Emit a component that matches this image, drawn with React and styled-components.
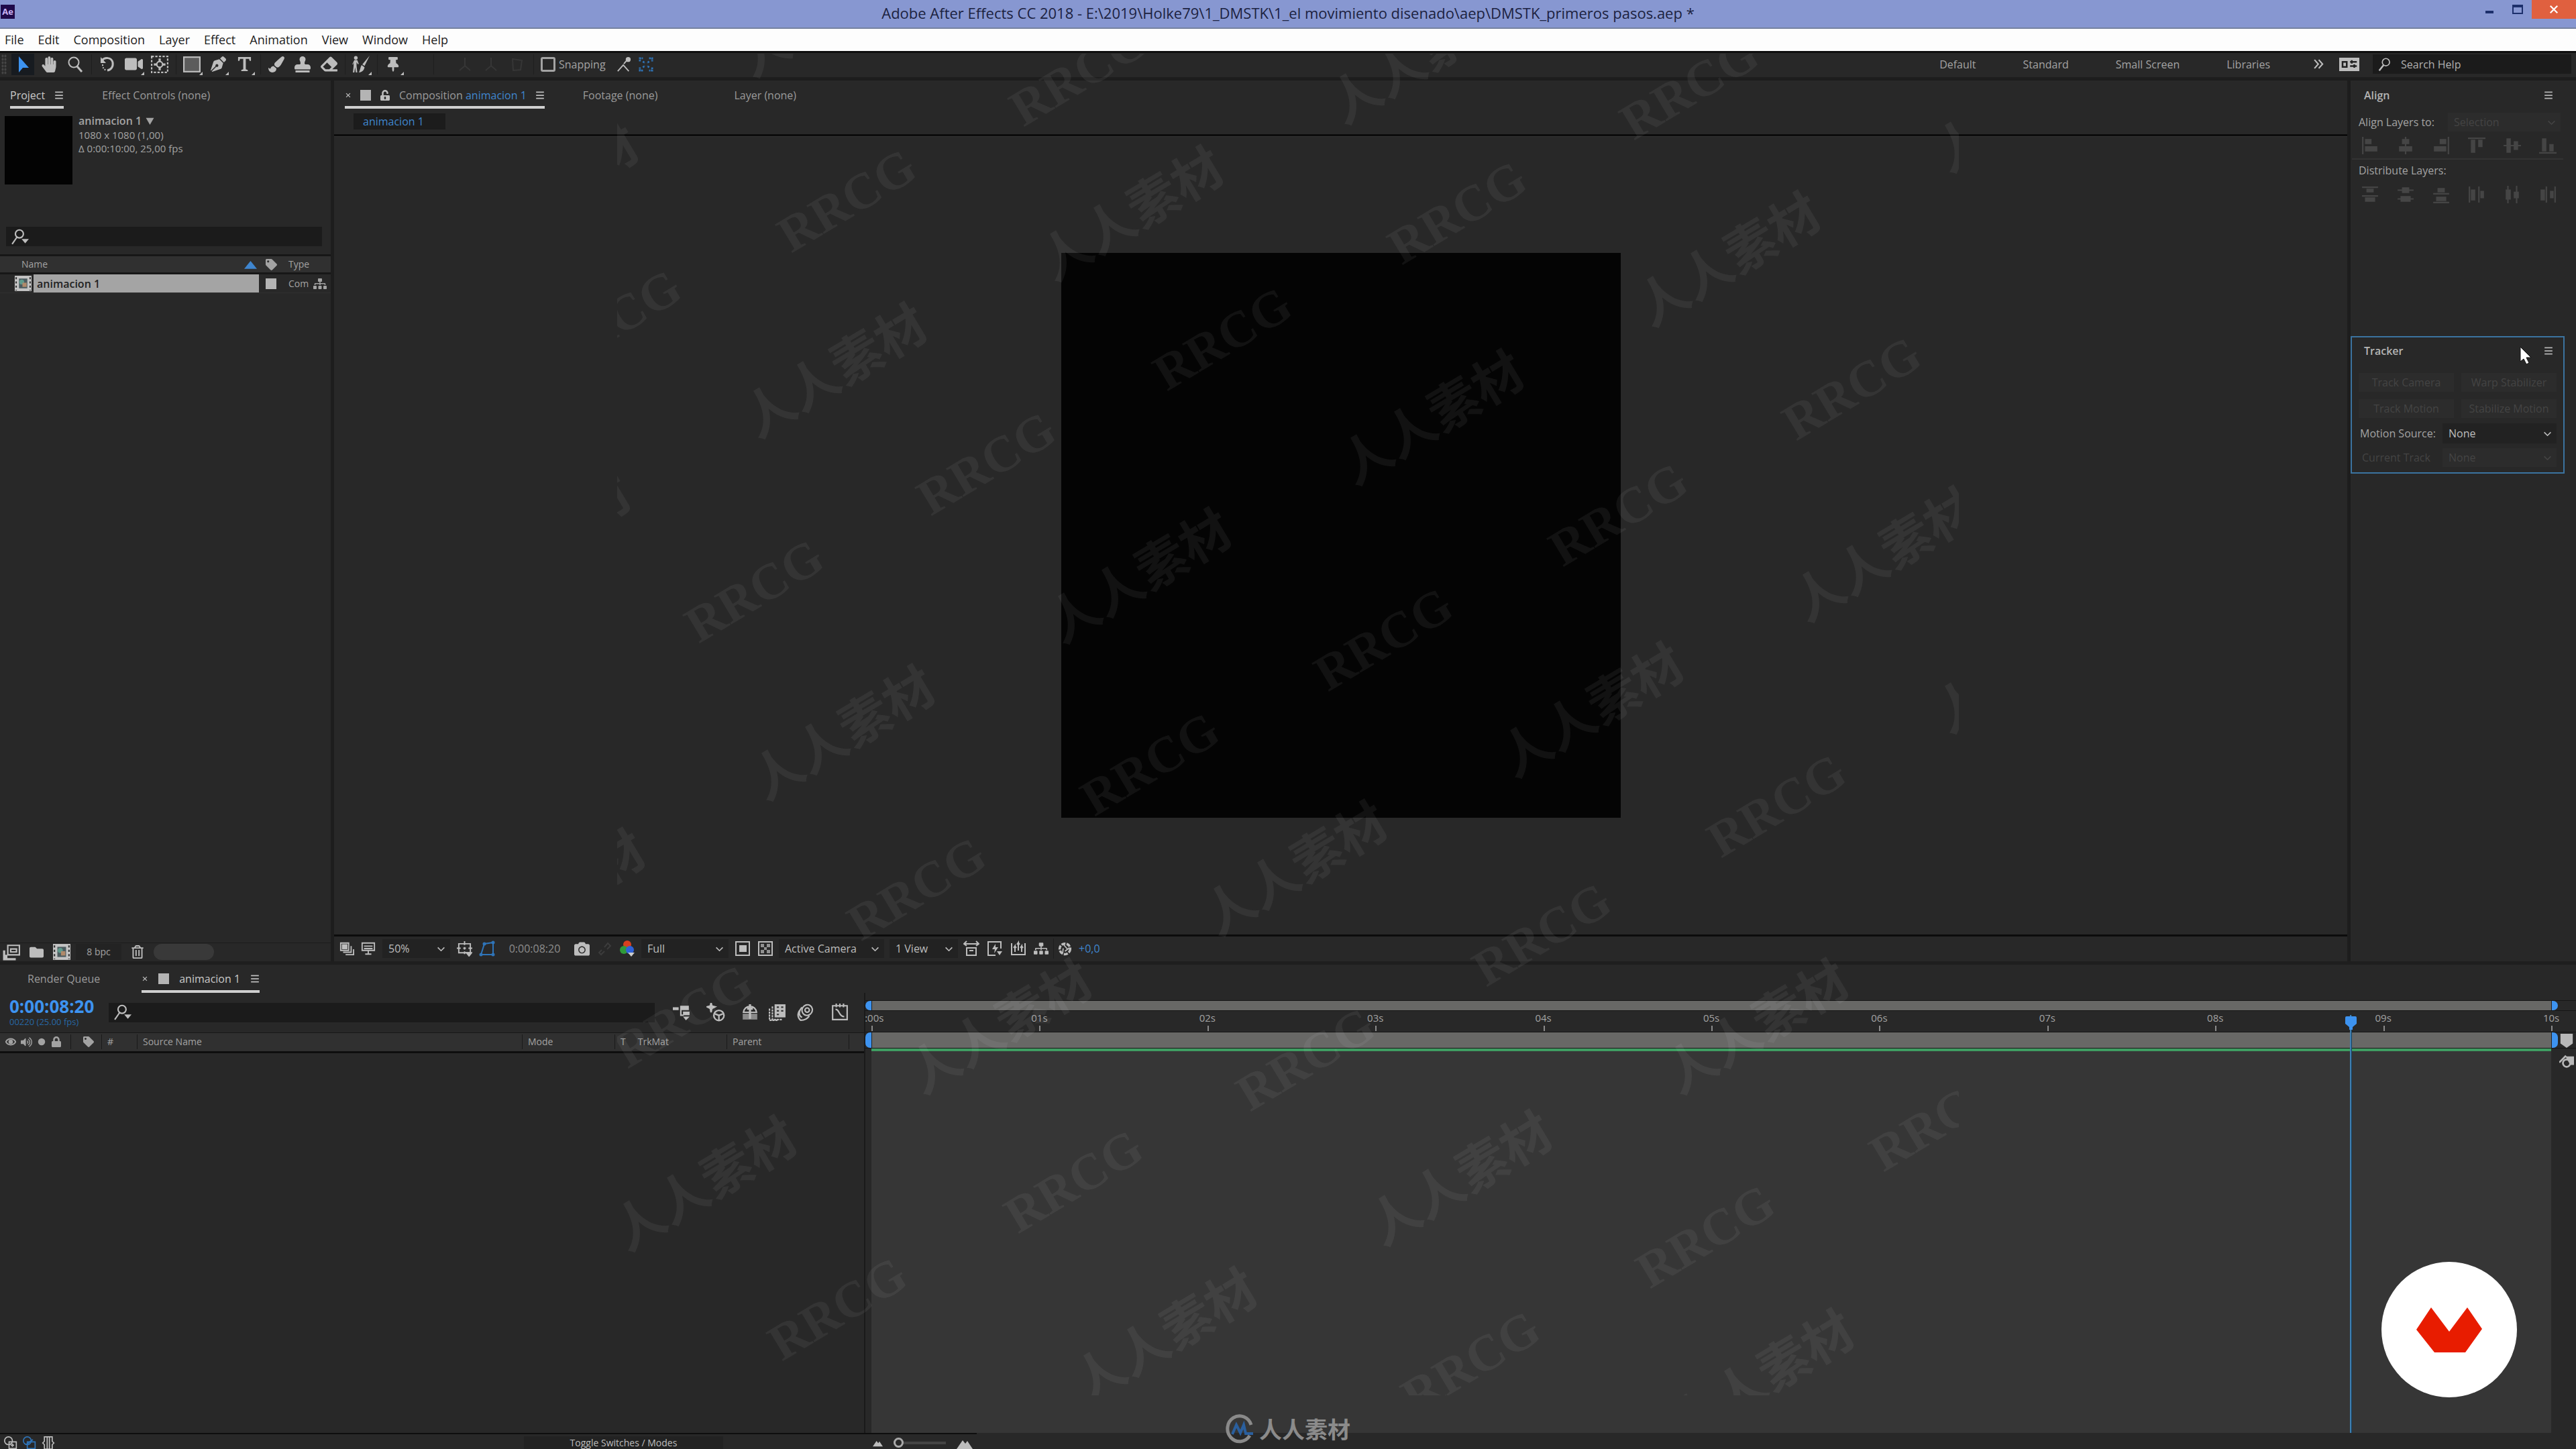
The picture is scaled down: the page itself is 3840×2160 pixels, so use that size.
import React from 'react';
import styled, { createGlobalStyle } from 'styled-components';
import {
    FaHandPaper, FaVideo, FaPenNib, FaPaintBrush, FaStamp, FaEraser, FaThumbtack, FaCamera,
    FaTag, FaFolder, FaRegTrashAlt, FaLock, FaUnlockAlt, FaSitemap, FaVolumeUp
} from 'react-icons/fa';

const GlobalStyle = createGlobalStyle`
    * { box-sizing: border-box; }
    body {
        margin: 0;
        background: #282828;
        color: #a3a3a3;
        font: 16px/20px "Open Sans", "Noto Sans CJK SC", sans-serif;
        overflow: hidden;
    }
    button, input, select { font: inherit; color: inherit; margin: 0; padding: 0; border: 0; background: none; border-radius: 0; }
    svg { display: block; flex: none; }
    a { color: inherit; text-decoration: none; }
`;

const Window = styled.div`
    position: relative;
    display: flex;
    flex-direction: column;
    height: 100vh;
    overflow: hidden;
`;

const TitleBar = styled.header`
    display: grid;
    grid-template-columns: 1fr auto 1fr;
    height: 43px;
    background: #8797d1;
    border-bottom: 2px solid #76839f;
    color: #1c2240;
`;

const AppBadge = styled.span`
    width: 21px;
    height: 21px;
    margin: 7px 0 0 1px;
    background: #1f0a4a;
    color: #c9b3f5;
    font-size: 13px;
    font-weight: 700;
    text-align: center;
`;

const Title = styled.h1`
    margin: 0;
    font-size: 22px;
    font-weight: 400;
    line-height: 38px;
`;

const WindowButtons = styled.div`
    display: flex;
    justify-content: flex-end;
    align-items: flex-start;
`;

const WindowButton = styled.button`
    display: flex;
    align-items: center;
    justify-content: center;
    width: ${props => (props.$close ? '66px' : '42px')};
    height: 28px;
    background: ${props => (props.$close ? '#e0603f' : 'none')};
    color: ${props => (props.$close ? '#fff' : '#1c2f6b')};
`;

const MenuBar = styled.nav`
    display: flex;
    gap: 21px;
    height: 33px;
    padding-left: 7px;
    background: #fdfdfd;
    color: #222;
    font-size: 18px;
    line-height: 32px;
`;

const Toolbar = styled.div`
    display: flex;
    align-items: center;
    height: 44px;
    padding-bottom: 3px;
    border-top: 3px solid #0e0e0e;
    border-bottom: 5px solid #1d1d1d;
    background: #282828;
`;

const Grip = styled.span`
    width: 8px;
    height: 30px;
    margin: 0 7px 0 2px;
    background-image: radial-gradient(#454545 1px, transparent 2px);
    background-size: 4px 5px;
`;

const ToolGroup = styled.div`
    display: flex;
    gap: 5px;
`;

const Tool = styled.button`
    position: relative;
    display: flex;
    align-items: center;
    justify-content: center;
    width: 34px;
    height: 32px;
    background: ${props => (props.$active ? '#171b20' : 'none')};
    color: ${props => (props.$active ? '#3d93f0' : props.$dim ? '#363636' : '#bdbdbd')};

    &::after {
        content: '';
        display: ${props => (props.$more ? 'block' : 'none')};
        position: absolute;
        right: 1px;
        bottom: 0;
        border-left: 5px solid transparent;
        border-bottom: 5px solid #bdbdbd;
    }
`;

const Separator = styled.span`
    flex: none;
    width: 1px;
    height: 30px;
    margin: 0 6px 0 7px;
    background: #1e1e1e;
`;

const Spacer = styled.span`
    flex: ${props => (props.$w ? `0 0 ${props.$w}px` : '1')};
`;

const SnapLabel = styled.label`
    display: flex;
    align-items: center;
    gap: 5px;
    margin: 0 10px 0 4px;
`;

const Checkbox = styled.input`
    appearance: none;
    width: 22px;
    height: 22px;
    border: 3px solid #a3a3a3;
    border-radius: 3px;
`;

const Workspaces = styled.nav`
    display: flex;
    gap: 70px;
    margin-right: 64px;
`;

const PlainButton = styled.button`
    display: flex;
    align-items: center;
    justify-content: center;
    color: ${props => props.$color || '#bdbdbd'};
`;

const HelpSearch = styled.label`
    display: flex;
    align-items: center;
    gap: 14px;
    width: 296px;
    height: 29px;
    margin: 0 7px 0 20px;
    padding-left: 8px;
    background: #1b1b1b;
    color: #bdbdbd;
`;

const SearchInput = styled.input`
    flex: 1;
    min-width: 0;
    height: 24px;
    outline: 0;
    &::placeholder { color: #b0b0b0; opacity: 1; }
`;

const Workspace = styled.main`
    display: flex;
    flex: 20 1 0;
    min-height: 0;
`;

const Panel = styled.section`
    display: flex;
    flex-direction: column;
    flex: ${props => props.$flex || '1'};
    min-width: 0;
    background: #282828;
    border-right: ${props => (props.$last ? '0' : '5px solid #1d1d1d')};
`;

const TabBar = styled.div`
    display: flex;
    flex: none;
    height: 42px;
    padding: 0 ${props => props.$pad || 15}px;
    gap: ${props => props.$gap || 57}px;
`;

const Tab = styled.div`
    display: flex;
    align-items: center;
    gap: ${props => props.$gap || 14}px;
    height: 42px;
    padding-top: 5px;
    border-bottom: 4px solid ${props => (props.$active ? '#cfcfcf' : 'transparent')};
    color: ${props => (props.$bright ? '#c8c8c8' : '#9a9a9a')};
    white-space: nowrap;

    > svg { color: #bdbdbd; }
`;

const Swatch = styled.span`
    width: 16px;
    height: 16px;
    background: #b4b4b4;
`;

const Blue = styled.span`
    color: #3f86cf;
`;

const ProjectInfo = styled.div`
    display: flex;
    gap: 9px;
    padding: 11px 7px 0;
    height: 174px;
    font-size: 15px;
`;

const Thumb = styled.div`
    width: 101px;
    height: 102px;
    background: #030303;
`;

const ItemName = styled.div`
    display: flex;
    align-items: center;
    gap: 6px;
    font-size: 16px;
    font-weight: 600;
    margin-top: -4px;
    height: 22px;
`;

const FilterBox = styled.label`
    display: flex;
    align-items: center;
    flex: ${props => (props.$grow ? '1' : 'none')};
    gap: 8px;
    height: 29px;
    margin: ${props => (props.$grow ? '0' : '2px 13px 12px 9px')};
    padding-left: 8px;
    background: #1b1b1b;
    color: #bdbdbd;
`;

const Items = styled.table`
    width: 100%;
    border-collapse: collapse;
    table-layout: fixed;
    border-top: 3px solid #171717;

    th {
        height: 27px;
        padding: 0;
        background: #303030;
        font-size: 14px;
        font-weight: 400;
        text-align: left;
        border-bottom: 3px solid #171717;
    }
    td {
        height: 28px;
        padding: 0;
        border-bottom: 1px solid #303030;
    }
`;

const HeaderCell = styled.span`
    display: flex;
    align-items: center;
    justify-content: space-between;
    padding: 0 13px 0 ${props => props.$pad || 0}px;
`;

const ItemCell = styled.span`
    display: flex;
    align-items: center;
    height: 27px;
    margin-right: 10px;
    padding-left: 5px;
    background: #a4a4a4;
    color: #222;
    font-weight: 600;
`;

const TypeCell = styled.span`
    display: flex;
    align-items: center;
    justify-content: space-between;
    padding-right: 6px;
    color: #a3a3a3;
    font-size: 14px;
`;

const Footer = styled.div`
    display: flex;
    align-items: center;
    flex: none;
    height: ${props => (props.$viewer ? 40 : 28)}px;
    padding: ${props => (props.$viewer ? '0 8px' : '0 4px')};
    border-top: ${props => (props.$viewer ? 3 : 1)}px solid ${props => (props.$viewer ? '#0c0c0c' : '#1d1d1d')};
`;

const FooterIcons = styled.div`
    display: flex;
    align-items: center;
    gap: ${props => props.$gap || 10}px;
`;

const Depth = styled.button`
    width: 68px;
    height: 24px;
    margin: 0 14px 0 8px;
    background: #232323;
    font-size: 14px;
`;

const ScrollThumb = styled.span`
    width: 90px;
    height: 24px;
    margin-left: 14px;
    border-radius: 12px;
    background: #393939;
`;

const SubTabs = styled.div`
    height: 41px;
    padding: 7px 29px;
    border-bottom: 3px solid #0c0c0c;
`;

const SubTab = styled.button`
    width: 137px;
    height: 24px;
    padding-left: 14px;
    background: #1c1c1c;
    color: #3f86cf;
    text-align: left;
`;

const Viewer = styled.div`
    display: flex;
    align-items: center;
    justify-content: center;
    flex: 1;
    border-top: 1px solid #333;
`;

const Composition = styled.div`
    width: 834px;
    height: 842px;
    background: #040404;
`;

const SelectWrap = styled.span`
    display: grid;
    align-items: center;
    width: ${props => props.$w}px;
    height: ${props => props.$h || 28}px;
    margin: 0 ${props => props.$m || 0}px;
    background: ${props => (props.$dim ? '#2c2c2c' : '#222')};
    color: ${props => (props.$dim ? '#444' : '#bdbdbd')};

    > select, > svg { grid-area: 1 / 1; }
    > select { appearance: none; padding-left: 9px; height: 100%; outline: 0; opacity: 1; }
    > svg { justify-self: end; margin-right: 7px; pointer-events: none; }
`;

const Timecode = styled.button`
    width: 98px;
    color: #8d8d8d;
`;

const SideBlock = styled.div`
    display: flex;
    flex-direction: column;
    margin-right: 17px;
    height: ${props => props.$h}px;
    border: 2px solid ${props => (props.$active ? '#3b73a0' : 'transparent')};
`;

const SideTitle = styled.div`
    display: flex;
    align-items: center;
    justify-content: space-between;
    height: 40px;
    margin-bottom: 4px;
    padding: 0 15px 0 18px;
    color: #b4b4b4;
    font-weight: 600;
`;

const SideRow = styled.div`
    display: flex;
    align-items: center;
    justify-content: space-between;
    height: ${props => props.$h || 30}px;
    padding: 0 ${props => props.$pr || 10}px 0 ${props => props.$pl || 10}px;
    color: ${props => (props.$dim ? '#444' : '#a3a3a3')};
    border-bottom: ${props => (props.$line ? '2px solid #333' : '0')};
    white-space: nowrap;
`;

const TrackerButton = styled.button`
    width: ${props => props.$w}px;
    height: 28px;
    background: #2c2c2c;
    color: #444;
    white-space: nowrap;
`;

const Timeline = styled.section`
    display: flex;
    flex-direction: column;
    flex: 11 1 0;
    min-height: 0;
    border-top: 5px solid #1e1e1e;
`;

const TimelineBody = styled.div`
    display: flex;
    flex: 1;
    min-height: 0;
`;

const LayerPane = styled.div`
    display: flex;
    flex-direction: column;
    flex: 0 0 1290px;
    border-right: 2px solid #1a1a1a;
`;

const LayerTools = styled.div`
    display: flex;
    align-items: center;
    height: 59px;
    padding-left: 14px;
`;

const CurrentTime = styled.div`
    width: 148px;
    color: #2767a5;
    font-size: 13px;
    line-height: 18px;

    > strong {
        display: block;
        color: #3d93f0;
        font-size: 26px;
        line-height: 28px;
    }
`;

const LayerHeader = styled.div`
    display: flex;
    align-items: center;
    height: 31px;
    border-top: 1px solid #171717;
    border-bottom: 3px solid #0e0e0e;
    background: #303030;
    font-size: 14px;
`;

const Column = styled.div`
    display: flex;
    align-items: center;
    flex: ${props => (props.$w ? `0 0 ${props.$w}px` : '1')};
    gap: 7px;
    height: 22px;
    padding-left: 8px;
    border-left: ${props => (props.$first ? '0' : '1px solid #1a1a1a')};
`;

const TimePane = styled.div`
    position: relative;
    display: flex;
    flex-direction: column;
    flex: 1;
    min-width: 0;
    overflow: hidden;
    padding-top: 11px;
`;

const RangeRow = styled.div`
    display: flex;
    height: ${props => props.$h}px;
    padding-right: 27px;
    border: solid #161616;
    border-width: 1px 0;
`;

const RangeHandle = styled.span`
    width: 9px;
    background: #3d93f0;
    border-radius: ${props => (props.$end ? '0 7px 7px 0' : '7px 0 0 7px')};
`;

const RangeBar = styled.span`
    flex: 1;
    background: #686866;
    border-left: 1px solid #222;
    border-right: 1px solid #222;
`;

const Ruler = styled.div`
    display: flex;
    height: 31px;
    margin: 0 37px 0 9px;
    font-size: 15px;
`;

const Mark = styled.div`
    flex: ${props => (props.$last ? '0 0 0' : '1 1 0')};
    min-width: 0;

    > span {
        display: block;
        width: 60px;
        margin-left: -30px;
        text-align: center;
    }
    &::after {
        content: '';
        display: block;
        width: 2px;
        height: 8px;
        margin-top: 2px;
        background: #8a8a8a;
    }
`;

const Tracks = styled.div`
    flex: 1;
    margin: 0 37px 0 9px;
    border-top: 4px solid #3f9d62;
    background: #363636;
`;

const PlayheadLane = styled.div`
    position: absolute;
    inset: 33px 37px 0 9px;
    pointer-events: none;
`;

const Playhead = styled.div`
    position: absolute;
    top: 0;
    bottom: 0;
    width: 3px;
    background: #3f7fb0;
    border-right: 1px solid #16405f;

    > svg { margin: 2px 0 0 -8px; }
`;

const Gutter = styled.div`
    position: absolute;
    right: 3px;
    top: 60px;
    display: flex;
    flex-direction: column;
    gap: 9px;
    color: #b8b8b8;
`;

const TimelineFoot = styled.div`
    display: flex;
    align-items: center;
    height: 24px;
    flex: none;
`;

const FootPane = styled.div`
    display: flex;
    align-items: center;
    gap: 8px;
    flex: 0 0 ${props => props.$w}px;
    height: 24px;
    padding: 3px 6px 0;
    border-top: 2px solid #0e0e0e;
    color: #bdbdbd;
`;

const ToggleButton = styled.button`
    width: 297px;
    height: 19px;
    background: #222;
    font-size: 14px;
    line-height: 19px;
    margin-left: auto;
    margin-right: 200px;
`;

const ZoomSlider = styled.input`
    appearance: none;
    width: 78px;
    height: 4px;
    margin: 0 8px;
    background: #444;

    &::-webkit-slider-thumb {
        appearance: none;
        width: 15px;
        height: 15px;
        border: 3px solid #a8a8a8;
        border-radius: 50%;
        background: #282828;
    }
`;

const WatermarkLayer = styled.div`
    position: absolute;
    top: 3.7%;
    left: 23.96%;
    width: 52.08%;
    height: 92.6%;
    overflow: hidden;
    pointer-events: none;
`;

const Watermark = styled.span`
    position: absolute;
    transform: translate(-50%, -50%) rotate(-31deg);
    color: rgba(255, 255, 255, 0.06);
    font-family: ${props => (props.$latin ? '"Liberation Serif", serif' : '"Noto Sans CJK SC", sans-serif')};
    font-size: 76px;
    font-weight: 700;
    line-height: 1;
    white-space: nowrap;
`;

const SiteBrand = styled.div`
    position: absolute;
    left: 0;
    right: 0;
    bottom: 8px;
    display: flex;
    align-items: center;
    justify-content: center;
    gap: 8px;
    color: #8b8b8b;
    font: 700 34px/44px "Noto Sans CJK SC", sans-serif;
    pointer-events: none;
`;

const SchoolLogo = styled.div`
    position: absolute;
    right: 88px;
    bottom: 77px;
`;

const Cursor = styled.div`
    position: absolute;
    right: 65px;
    top: 516px;
    pointer-events: none;
`;

const stroke = { fill: 'none', stroke: 'currentColor', strokeWidth: 2 };

const shapes = {
    arrow: <path d="M6 0v24l6-7h9z" />,
    zoom: <g {...stroke}><circle cx="10" cy="9" r="7.5" /><path d="M15 15l7 8" strokeWidth="3" /></g>,
    rotate: <g {...stroke}><path d="M4 6c4-5 14-5 16 3 1 6-2 11-8 12" strokeWidth="3" /><path d="M5 12c0 5 2 8 6 9" strokeDasharray="2 2" /><path d="M2 1v9h8z" fill="currentColor" stroke="none" /></g>,
    anchor: <g {...stroke}><rect x="1" y="1" width="22" height="22" strokeDasharray="3 2" /><circle cx="12" cy="12" r="4" /><path d="M12 4v4M12 16v4M4 12h4M16 12h4" strokeWidth="3" /></g>,
    rect: <rect x="1" y="2" width="22" height="20" fill="#5c5c5c" stroke="currentColor" strokeWidth="2" />,
    type: <path d="M2 1h20v6h-2l-1-3h-5v16l3 1v2H7v-2l3-1V4H5L4 7H2z" />,
    roto: <g><circle cx="5" cy="3" r="2.5" /><path d="M3 6h4l2 5-1 1-2-3v5l1 9H5l-1-7-1 7H1l1-9V9l-1 3H0z" /><path d="M24 0l-7 14-3-2zM13 13l4 3c-1 5-4 7-8 7 2-2 2-7 4-10z" /></g>,
    axisLocal: <path d="M12 2v12M12 14l-8 7M12 14l8 7" {...stroke} />,
    axisWorld: <path d="M5 4l14 2-2 14-11 1z" {...stroke} />,
    snap: <g {...stroke}><path d="M2 23l9-10 9 10M12 11l5-6" /><circle cx="19" cy="4" r="3" fill="currentColor" /></g>,
    snapBox: <g {...stroke} strokeWidth="3"><path d="M2 7V2h5M17 2h5v5M22 17v5h-5M7 22H2v-5" strokeDasharray="3 1" /><path d="M7 7l3 3M17 7l-3 3M7 17l3-3M17 17l-3-3" strokeDasharray="3 1" /></g>,
    more: <path d="M3 3l8 9-8 9M12 3l8 9-8 9" {...stroke} strokeWidth="3" />,
    panels: <g><path d="M0 4h24v16H0z" /><path d="M4 9h5v6H4zM13 9h8M13 14h8M15 7v4M18 12v4" fill="none" stroke="#222" strokeWidth="2" /></g>,
    search: <g {...stroke}><circle cx="14" cy="8" r="6.5" /><path d="M10 13L2 23" strokeWidth="3" /></g>,
    filter: <g {...stroke}><circle cx="11" cy="8" r="5.5" /><path d="M8 12L1 22" /><path d="M14 15h10l-5 6z" fill="currentColor" stroke="none" /></g>,
    menu: <path d="M2 4h20M2 12h20M2 20h20" {...stroke} strokeWidth="3" />,
    close: <path d="M5 5l14 14M19 5L5 19" {...stroke} strokeWidth="3" />,
    chevron: <path d="M3 8l9 9 9-9" {...stroke} strokeWidth="3" />,
    down: <path d="M1 3h22L12 22z" />,
    up: <path d="M0 20h24L12 5z" />,
    comp: <g><path d="M0 1h24v22H0z" fill="#c4c4c4" /><path d="M2 3v19M22 3v19" stroke="#333" strokeWidth="2" strokeDasharray="3 3" /><path d="M6 5h12v14H6z" fill="#4d5c60" /><circle cx="10" cy="10" r="3.5" fill="#5f9a8c" /><path d="M11 11h6v6h-6z" fill="#b08a6a" /></g>,
    interpret: <g {...stroke}><path d="M7 3h16v13H7z" /><path d="M11 8h8v4h-8z" /><path d="M2 10v12h16M5 16v6" strokeWidth="3" /></g>,
    stack: <g {...stroke}><path d="M2 3h13v12H2zM6 18h13V8M10 22h13V13" /><path d="M5 6h7v6H5z" fill="currentColor" /></g>,
    monitor: <g {...stroke}><path d="M2 3h20v12H2zM5 8h14M5 12h14M12 15v5M7 21h10" /></g>,
    guides: <g {...stroke}><path d="M3 4h18v14H3zM12 0v6M12 9v4M12 16v4M0 11h6M18 11h6M10 11h4" /><path d="M15 18h8l-4 5z" fill="currentColor" /></g>,
    mask: <g {...stroke}><path d="M3 21L8 5l13-2v18z" /><circle cx="3" cy="21" r="1.5" /><circle cx="8" cy="5" r="1.5" /><circle cx="21" cy="3" r="1.5" /><circle cx="21" cy="21" r="1.5" /></g>,
    link: <path d="M8 14l-4 4 3 3 5-5M12 10l5-6 4 4-5 5" {...stroke} />,
    rgb: <g><circle cx="12" cy="6" r="6" fill="#d8401f" /><circle cx="7" cy="14" r="6" fill="#2f9a3a" /><circle cx="16" cy="14" r="6" fill="#2f62d8" /><path d="M13 18h10l-5 6z" fill="#ccc" /></g>,
    roi: <g {...stroke}><path d="M2 2h20v20H2z" /><path d="M8 8h9v8H8z" fill="currentColor" /></g>,
    checker: <g><path d="M2 2h20v20H2z" {...stroke} /><path d="M5 5h5v5H5zM14 5h5v5h-5zM10 10h4v4h-4zM5 14h5v5H5zM14 14h5v5h-5z" opacity=".7" /></g>,
    aspect: <g {...stroke}><path d="M1 5h22M5 1L1 5l4 3M19 1l4 4-4 3M5 11h14v11H5z" /><path d="M9 15h6" /></g>,
    fast: <g {...stroke}><path d="M21 12V2H2v20h11" /><path d="M13 5l-5 8h4l-1 6 6-9h-4z" fill="currentColor" stroke="none" /><path d="M15 16h8l-4 6z" fill="currentColor" stroke="none" /></g>,
    levels: <g {...stroke}><path d="M2 4v17h20V4M7 17V8l-2 3M7 8l2 3M12 15V3l-2 3M12 3l2 3M17 17V8l-2 3M17 8l2 3" /></g>,
    shutter: <g {...stroke}><circle cx="12" cy="12" r="9" strokeWidth="4" strokeDasharray="7 2" /><path d="M9 4l7 8M20 10l-8 6M8 20l1-9" /></g>,
    miniFlow: <g><path d="M0 5h8v4H0zM10 3h12v6H10zM14 11h9v5h-9zM14 18h9l-5 5z" /><path d="M11 8v8h4" {...stroke} /></g>,
    draft3d: <g {...stroke}><path d="M6 0l1 4 4 1-4 2-1 5-1-5-4-2 4-1z" fill="currentColor" /><circle cx="16" cy="16" r="6.5" /><path d="M11 14l5 2 5-2M16 16v6" /></g>,
    shy: <g><path d="M2 14h20v8H2z" opacity=".65" /><path d="M3 12c1-6 5-8 9-8s8 2 9 8z" fill="none" stroke="currentColor" strokeWidth="2" /><path d="M12 1v20M8 7h8" stroke="currentColor" strokeWidth="3" /></g>,
    blend: <g><path d="M8 1h15v18H8z" /><path d="M5 4v18h14M1 7v16h12" {...stroke} strokeDasharray="3 1" /><path d="M11 5h3M17 5h3M11 10h3M17 10h3M11 15h3" stroke="#333" strokeWidth="2" /></g>,
    blur: <g {...stroke}><ellipse cx="15" cy="9" rx="7" ry="7.5" transform="rotate(30 15 9)" /><path d="M8 5c-5 5-5 12 0 14M5 9c-4 5-3 11 1 14 6 0 10-3 12-6" /><circle cx="15" cy="9" r="3" /></g>,
    graph: <g {...stroke}><path d="M2 3h20v19H2zM7 0v5M12 0v5M17 0v5" /><path d="M6 8c6 0 4 10 12 10" /></g>,
    eye: <g {...stroke}><path d="M1 12c5-9 17-9 22 0-5 9-17 9-22 0z" strokeWidth="3" /><circle cx="12" cy="12" r="4" fill="currentColor" /></g>,
    dot: <circle cx="12" cy="12" r="9" />,
    marker: <path d="M2 1h20v16l-10 7-10-7z" />,
    button: <g><path d="M10 4h14v14h-6z" /><circle cx="12" cy="15" r="6" {...stroke} strokeWidth="3" /><path d="M0 14L11 3" {...stroke} strokeWidth="3" /></g>,
    layersA: <g {...stroke}><circle cx="8" cy="8" r="7" /><path d="M9 10h13v12H9zM15 13v6M12 16h6" /></g>,
    layersB: <g {...stroke}><circle cx="8" cy="8" r="7" /><path d="M8 10h14v12H8z" /><path d="M6 15l12-9" /></g>,
    braces: <path d="M9 1H5v8l-3 3 3 3v8h4M15 1h4v8l3 3-3 3v8h-4M10 1h4v22h-4z" {...stroke} />,
    hills: <path d="M0 21L9 8l4 5 3-4 8 12z" />,
    alignLeft: <path d="M1 0h2v24H1zM5 3h9v7H5zM5 13h17v7H5z" />,
    alignCenter: <path d="M11 0h2v24h-2zM7 3h10v7H7zM3 13h18v7H3z" />,
    alignRight: <path d="M21 0h2v24h-2zM10 3h9v7h-9zM2 13h17v7H2z" />,
    alignTop: <path d="M0 1h24v2H0zM4 4h6v18H4zM14 4h6v10h-6z" />,
    alignMiddle: <path d="M0 11h24v2H0zM4 2h6v20H4zM14 6h6v12h-6z" />,
    alignBottom: <path d="M0 21h24v2H0zM4 2h6v18H4zM14 10h6v10h-6z" />,
    distTop: <path d="M1 1h22v2H1zM7 4h10v5H7zM1 13h22v2H1zM5 16h14v6H5z" />,
    distMiddle: <path d="M1 5h22v2H1zM7 2h10v8H7zM1 17h22v2H1zM5 14h14v8H5z" />,
    distBottom: <path d="M1 10h22v2H1zM7 3h10v6H7zM1 22h22v2H1zM5 15h14v6H5z" />,
    distLeft: <path d="M1 1h2v22H1zM4 5h6v15H4zM14 1h2v22h-2zM17 7h5v10h-5z" />,
    distCenter: <path d="M5 0h2v24H5zM3 5h7v14H3zM17 0h2v24h-2zM14 8h7v9h-7z" />,
    distRight: <path d="M9 1h2v22H9zM2 5h6v15H2zM21 1h2v22h-2zM15 7h5v10h-5z" />
};

const Icon = ({ name, size = 24 }) => (
    <svg width={size} height={size} viewBox="0 0 24 24" fill="currentColor" aria-hidden="true">{shapes[name]}</svg>
);

const menus = ['File', 'Edit', 'Composition', 'Layer', 'Effect', 'Animation', 'View', 'Window', 'Help'];

const toolGroups = [
    [
        { label: 'Selection', icon: <Icon name="arrow" />, active: true },
        { label: 'Hand', icon: <FaHandPaper size={24} /> },
        { label: 'Zoom', icon: <Icon name="zoom" /> }
    ],
    [
        { label: 'Rotation', icon: <Icon name="rotate" /> },
        { label: 'Camera', icon: <FaVideo size={27} />, more: true },
        { label: 'Pan Behind', icon: <Icon name="anchor" size={26} /> }
    ],
    [
        { label: 'Rectangle', icon: <Icon name="rect" size={26} />, more: true },
        { label: 'Pen', icon: <FaPenNib size={23} />, more: true },
        { label: 'Type', icon: <Icon name="type" size={23} />, more: true }
    ],
    [
        { label: 'Brush', icon: <FaPaintBrush size={24} /> },
        { label: 'Clone Stamp', icon: <FaStamp size={24} /> },
        { label: 'Eraser', icon: <FaEraser size={25} /> }
    ],
    [{ label: 'Roto Brush', icon: <Icon name="roto" size={26} />, more: true }],
    [{ label: 'Puppet Pin', icon: <FaThumbtack size={22} />, more: true }]
];

const latinMarks = [
    [17.1, 10.9], [34.4, 1.5], [62.6, 11.8], [79.9, 2.5], [45.1, 21.2], [27.5, 30.5], [10.2, 40], [74.6, 34.3],
    [92, 24.9], [57.1, 43.6], [39.7, 52.9], [86.4, 56], [22.3, 62.2], [68.9, 65.6], [51.3, 74.9], [4.9, 71.7],
    [98.5, 79.4], [34, 84], [81.1, 88.1], [16.4, 93.5], [63.6, 97.5], [-0.4, 19.9]
];

const hanMarks = [
    [15.7, -3.5], [59.8, 0], [38.2, 11.7], [82.7, 15.1], [16.1, 23.4], [60.6, 26.9], [38.8, 38.7], [94.3, 37.1],
    [72.5, 48.7], [16.7, 50.4], [50.4, 60.5], [28.4, 72.3], [84.8, 72.3], [6.4, 84], [62.7, 83.6], [40.7, 95.3],
    [85.2, 98.4], [-5.4, 10], [-6, 36], [-4.9, 62.6], [104.9, 3.6], [104.9, 45.4]
];

const marks = ['0:00s', '01s', '02s', '03s', '04s', '05s', '06s', '07s', '08s', '09s', '10s'];

const Select = ({ label, value, w, h, m, disabled }) => (
    <SelectWrap $w={w} $h={h} $m={m} $dim={disabled}>
        <select aria-label={label} defaultValue={value} disabled={disabled}>
            <option>{value}</option>
        </select>
        <Icon name="chevron" size={13} />
    </SelectWrap>
);

const Tools = () => (
    <Toolbar>
        <Grip />
        {toolGroups.map((group, i) => (
            <React.Fragment key={i}>
                {i > 0 && <Separator />}
                <ToolGroup>
                    {group.map(tool => (
                        <Tool key={tool.label} aria-label={tool.label} $active={tool.active} $more={tool.more}>{tool.icon}</Tool>
                    ))}
                </ToolGroup>
            </React.Fragment>
        ))}
        <Spacer $w={36} />
        <Separator />
        <Spacer $w={23} />
        <ToolGroup>
            <Tool $dim aria-label="Local Axis"><Icon name="axisLocal" /></Tool>
            <Tool $dim aria-label="World Axis"><Icon name="axisLocal" /></Tool>
            <Tool $dim aria-label="View Axis"><Icon name="axisWorld" /></Tool>
        </ToolGroup>
        <Separator />
        <SnapLabel><Checkbox type="checkbox" />Snapping</SnapLabel>
        <ToolGroup>
            <Tool aria-label="Snap Edges"><Icon name="snap" size={22} /></Tool>
            <PlainButton $color="#2f74b8" aria-label="Snap Features"><Icon name="snapBox" size={22} /></PlainButton>
        </ToolGroup>
        <Spacer />
        <Workspaces>
            <a href="#default">Default</a>
            <a href="#standard">Standard</a>
            <a href="#small-screen">Small Screen</a>
            <a href="#libraries">Libraries</a>
        </Workspaces>
        <PlainButton aria-label="More Workspaces"><Icon name="more" size={17} /></PlainButton>
        <Spacer $w={22} />
        <PlainButton aria-label="Workspace Panel"><Icon name="panels" size={30} /></PlainButton>
        <HelpSearch>
            <Icon name="search" size={20} />
            <SearchInput aria-label="Search Help" placeholder="Search Help" />
        </HelpSearch>
    </Toolbar>
);

const ProjectPanel = () => (
    <Panel $flex="0 0 498px">
        <TabBar>
            <Tab $active $bright>Project<Icon name="menu" size={14} /></Tab>
            <Tab>Effect Controls (none)</Tab>
        </TabBar>
        <ProjectInfo>
            <Thumb />
            <div>
                <ItemName>animacion 1<Icon name="down" size={13} /></ItemName>
                <div>1080 x 1080 (1,00)</div>
                <div>Δ 0:00:10:00, 25,00 fps</div>
            </div>
        </ProjectInfo>
        <FilterBox>
            <Icon name="filter" size={26} />
            <SearchInput aria-label="Search project" />
        </FilterBox>
        <Items>
            <colgroup>
                <col width="22" />
                <col width="28" />
                <col />
                <col width="34" />
                <col width="63" />
            </colgroup>
            <thead>
                <tr>
                    <th></th>
                    <th colSpan="2"><HeaderCell $pad={10}>Name<Blue><Icon name="up" size={19} /></Blue></HeaderCell></th>
                    <th><FaTag size={17} /></th>
                    <th>Type</th>
                </tr>
            </thead>
            <tbody>
                <tr>
                    <td></td>
                    <td><Icon name="comp" size={25} /></td>
                    <td><ItemCell>animacion 1</ItemCell></td>
                    <td><Swatch as="div" /></td>
                    <td><TypeCell>Com<FaSitemap size={20} /></TypeCell></td>
                </tr>
            </tbody>
        </Items>
        <Spacer />
        <Footer>
            <FooterIcons $gap={14}>
                <PlainButton aria-label="Interpret Footage"><Icon name="interpret" size={26} /></PlainButton>
                <PlainButton aria-label="New Folder"><FaFolder size={21} /></PlainButton>
                <PlainButton aria-label="New Composition"><Icon name="comp" size={26} /></PlainButton>
            </FooterIcons>
            <Depth>8 bpc</Depth>
            <PlainButton aria-label="Delete"><FaRegTrashAlt size={20} /></PlainButton>
            <ScrollThumb />
        </Footer>
    </Panel>
);

const ViewerPanel = () => (
    <Panel $flex="1">
        <TabBar $pad={16}>
            <Tab $active $gap={13}>
                <Icon name="close" size={10} />
                <Swatch />
                <FaUnlockAlt size={16} />
                <span>Composition <Blue>animacion 1</Blue></span>
                <Icon name="menu" size={14} />
            </Tab>
            <Tab>Footage (none)</Tab>
            <span />
            <Tab>Layer (none)</Tab>
        </TabBar>
        <SubTabs><SubTab>animacion 1</SubTab></SubTabs>
        <Viewer><Composition /></Viewer>
        <Footer $viewer>
            <FooterIcons>
                <PlainButton aria-label="Always Preview"><Icon name="stack" size={22} /></PlainButton>
                <PlainButton aria-label="Primary Viewer"><Icon name="monitor" size={22} /></PlainButton>
            </FooterIcons>
            <Select label="Magnification" value="50%" w={101} m={10} />
            <FooterIcons>
                <PlainButton aria-label="Grid and Guides"><Icon name="guides" size={23} /></PlainButton>
                <PlainButton $color="#2f74b8" aria-label="Mask Visibility"><Icon name="mask" size={24} /></PlainButton>
            </FooterIcons>
            <Spacer $w={10} />
            <Timecode>0:00:08:20</Timecode>
            <Spacer $w={10} />
            <FooterIcons>
                <PlainButton aria-label="Snapshot"><FaCamera size={23} /></PlainButton>
                <PlainButton $color="#3c3c3c" aria-label="Show Snapshot"><Icon name="link" /></PlainButton>
                <PlainButton aria-label="Channels"><Icon name="rgb" /></PlainButton>
            </FooterIcons>
            <Select label="Resolution" value="Full" w={130} m={9} />
            <FooterIcons>
                <PlainButton aria-label="Region of Interest"><Icon name="roi" /></PlainButton>
                <PlainButton aria-label="Transparency Grid"><Icon name="checker" /></PlainButton>
            </FooterIcons>
            <Spacer $w={4} />
            <Select label="Camera" value="Active Camera" w={157} m={4} />
            <Select label="View Layout" value="1 View" w={102} m={4} />
            <Spacer $w={4} />
            <FooterIcons $gap={11}>
                <PlainButton aria-label="Pixel Aspect"><Icon name="aspect" /></PlainButton>
                <PlainButton aria-label="Fast Previews"><Icon name="fast" /></PlainButton>
                <PlainButton aria-label="Timeline"><Icon name="levels" /></PlainButton>
                <PlainButton aria-label="Flowchart"><FaSitemap size={22} /></PlainButton>
            </FooterIcons>
            <Separator />
            <PlainButton aria-label="Reset Exposure"><Icon name="shutter" size={21} /></PlainButton>
            <Spacer $w={10} />
            <Blue>+0,0</Blue>
        </Footer>
    </Panel>
);

const IconRow = ({ names, line }) => (
    <SideRow $h={40} $pl={14} $pr={10} $line={line}>
        {names.map(name => (
            <PlainButton key={name} $color="#454545" aria-label={name}><Icon name={name} size={26} /></PlainButton>
        ))}
    </SideRow>
);

const SidePanels = () => (
    <Panel $last $flex="0 0 336px">
        <SideBlock $h={381}>
            <SideTitle>Align<Icon name="menu" size={14} /></SideTitle>
            <SideRow $h={32} $pr={4}>Align Layers to:<Select label="Align Layers to" value="Selection" w={168} disabled /></SideRow>
            <IconRow names={['alignLeft', 'alignCenter', 'alignRight', 'alignTop', 'alignMiddle', 'alignBottom']} line />
            <SideRow $h={32}>Distribute Layers:</SideRow>
            <IconRow names={['distTop', 'distMiddle', 'distBottom', 'distLeft', 'distCenter', 'distRight']} />
        </SideBlock>
        <SideBlock $active $h={205}>
            <SideTitle>Tracker<Icon name="menu" size={14} /></SideTitle>
            <SideRow $h={46}>
                <TrackerButton $w={142} disabled>Track Camera</TrackerButton>
                <TrackerButton $w={142} disabled>Warp Stabilizer</TrackerButton>
            </SideRow>
            <SideRow $h={32}>
                <TrackerButton $w={142} disabled>Track Motion</TrackerButton>
                <TrackerButton $w={142} disabled>Stabilize Motion</TrackerButton>
            </SideRow>
            <SideRow $h={42} $pl={12}>Motion Source:<Select label="Motion Source" value="None" w={170} h={30} /></SideRow>
            <SideRow $h={30} $pl={15} $dim>Current Track<Select label="Current Track" value="None" w={170} disabled /></SideRow>
        </SideBlock>
    </Panel>
);

const TimelinePanel = () => (
    <Timeline>
        <TabBar $pad={41} $gap={62}>
            <Tab>Render Queue</Tab>
            <Tab $active $bright $gap={15}>
                <Icon name="close" size={10} />
                <Swatch />
                <span>animacion 1</span>
                <Icon name="menu" size={14} />
            </Tab>
        </TabBar>
        <TimelineBody>
            <LayerPane>
                <LayerTools>
                    <CurrentTime><strong>0:00:08:20</strong>00220 (25.00 fps)</CurrentTime>
                    <FilterBox $grow>
                        <Icon name="filter" size={26} />
                        <SearchInput aria-label="Search layers" />
                    </FilterBox>
                    <Spacer $w={27} />
                    <FooterIcons $gap={24}>
                        <PlainButton aria-label="Mini-Flowchart"><Icon name="miniFlow" size={26} /></PlainButton>
                        <PlainButton aria-label="Draft 3D"><Icon name="draft3d" size={28} /></PlainButton>
                    </FooterIcons>
                    <Spacer $w={24} />
                    <FooterIcons $gap={15}>
                        <PlainButton aria-label="Hide Shy Layers"><Icon name="shy" size={26} /></PlainButton>
                        <PlainButton aria-label="Frame Blending"><Icon name="blend" size={26} /></PlainButton>
                        <PlainButton aria-label="Motion Blur"><Icon name="blur" size={26} /></PlainButton>
                    </FooterIcons>
                    <Spacer $w={26} />
                    <PlainButton aria-label="Graph Editor"><Icon name="graph" size={26} /></PlainButton>
                    <Spacer $w={23} />
                </LayerTools>
                <LayerHeader>
                    <Column $first $w={105}>
                        <Icon name="eye" size={16} />
                        <FaVolumeUp size={17} />
                        <Icon name="dot" size={14} />
                        <FaLock size={16} />
                    </Column>
                    <Column $w={46}><Spacer $w={3} /><FaTag size={16} /></Column>
                    <Column $w={53}>#</Column>
                    <Column>Source Name</Column>
                    <Column $w={138}>Mode</Column>
                    <Column $w={167}>T<Spacer $w={4} />TrkMat</Column>
                    <Column $w={182}>Parent</Column>
                    <Column $w={23} />
                </LayerHeader>
            </LayerPane>
            <TimePane>
                <RangeRow $h={16}><RangeHandle /><RangeBar /><RangeHandle $end /></RangeRow>
                <Ruler>
                    {marks.map((mark, i) => (
                        <Mark key={mark} $last={i === marks.length - 1}><span>{mark}</span></Mark>
                    ))}
                </Ruler>
                <RangeRow $h={25}><RangeHandle /><RangeBar /><RangeHandle $end /></RangeRow>
                <Tracks />
                <PlayheadLane>
                    <Playhead style={{ left: '88%' }}>
                        <svg width="19" height="20" viewBox="0 0 19 20" fill="#3d93f0"><path d="M1 2q0-2 2-2h13q2 0 2 2v9l-6 5v4H7v-4l-6-5z" /></svg>
                    </Playhead>
                </PlayheadLane>
                <Gutter>
                    <Icon name="marker" size={22} />
                    <Icon name="button" size={22} />
                </Gutter>
            </TimePane>
        </TimelineBody>
        <TimelineFoot>
            <FootPane $w={1284}>
                <PlainButton aria-label="Layer Switches"><Icon name="layersA" size={20} /></PlainButton>
                <PlainButton $color="#2f74b8" aria-label="Transfer Controls"><Icon name="layersB" size={20} /></PlainButton>
                <PlainButton aria-label="In and Out"><Icon name="braces" size={20} /></PlainButton>
                <ToggleButton>Toggle Switches / Modes</ToggleButton>
            </FootPane>
            <FootPane $w={172}>
                <Spacer />
                <Icon name="hills" size={15} />
                <ZoomSlider type="range" aria-label="Timeline zoom" defaultValue="0" />
                <Icon name="hills" size={24} />
            </FootPane>
        </TimelineFoot>
    </Timeline>
);

const App = () => (
    <Window>
        <GlobalStyle />
        <TitleBar>
            <AppBadge>Ae</AppBadge>
            <Title>Adobe After Effects CC 2018 - E:\2019\Holke79\1_DMSTK\1_el movimiento disenado\aep\DMSTK_primeros pasos.aep *</Title>
            <WindowButtons>
                <WindowButton aria-label="Minimize">
                    <svg width="12" height="12" fill="currentColor"><path d="M0 8h12v4H0z" /></svg>
                </WindowButton>
                <WindowButton aria-label="Maximize">
                    <svg width="16" height="14" fill="none" stroke="currentColor" strokeWidth="2"><path d="M1 1h14v12H1zM1 3h14" /></svg>
                </WindowButton>
                <WindowButton $close aria-label="Close"><Icon name="close" size={18} /></WindowButton>
            </WindowButtons>
        </TitleBar>
        <MenuBar>
            {menus.map(menu => <a key={menu} href={`#${menu}`}>{menu}</a>)}
        </MenuBar>
        <Tools />
        <Workspace>
            <ProjectPanel />
            <ViewerPanel />
            <SidePanels />
        </Workspace>
        <TimelinePanel />
        <WatermarkLayer>
            {latinMarks.map(([x, y]) => <Watermark key={`${x}-${y}`} $latin style={{ left: `${x}%`, top: `${y}%` }}>RRCG</Watermark>)}
            {hanMarks.map(([x, y]) => <Watermark key={`${x}-${y}`} style={{ left: `${x}%`, top: `${y}%` }}>人人素材</Watermark>)}
        </WatermarkLayer>
        <SiteBrand>
            <svg width="42" height="44" viewBox="0 0 42 44" fill="none">
                <path d="M38 16A18 19 0 1 0 36 32" stroke="#8a8a8a" strokeWidth="5" />
                <path d="M10 30l6-14 6 12 5-12 3 13h11" stroke="#2a5f9e" strokeWidth="4" />
            </svg>
            <span>人人素材</span>
        </SiteBrand>
        <SchoolLogo>
            <svg width="202" height="202" viewBox="0 0 202 202">
                <circle cx="101" cy="101" r="101" fill="#fff" />
                <path d="M52 101l22-33 27 36 27-36 22 32-25 35H79z" fill="#e81c00" />
            </svg>
        </SchoolLogo>
        <Cursor>
            <svg width="20" height="28" viewBox="0 0 20 28"><path d="M2 1v22l5-4 4 8 4-2-4-8h7z" fill="#fff" stroke="#111" /></svg>
        </Cursor>
    </Window>
);

export default App;
